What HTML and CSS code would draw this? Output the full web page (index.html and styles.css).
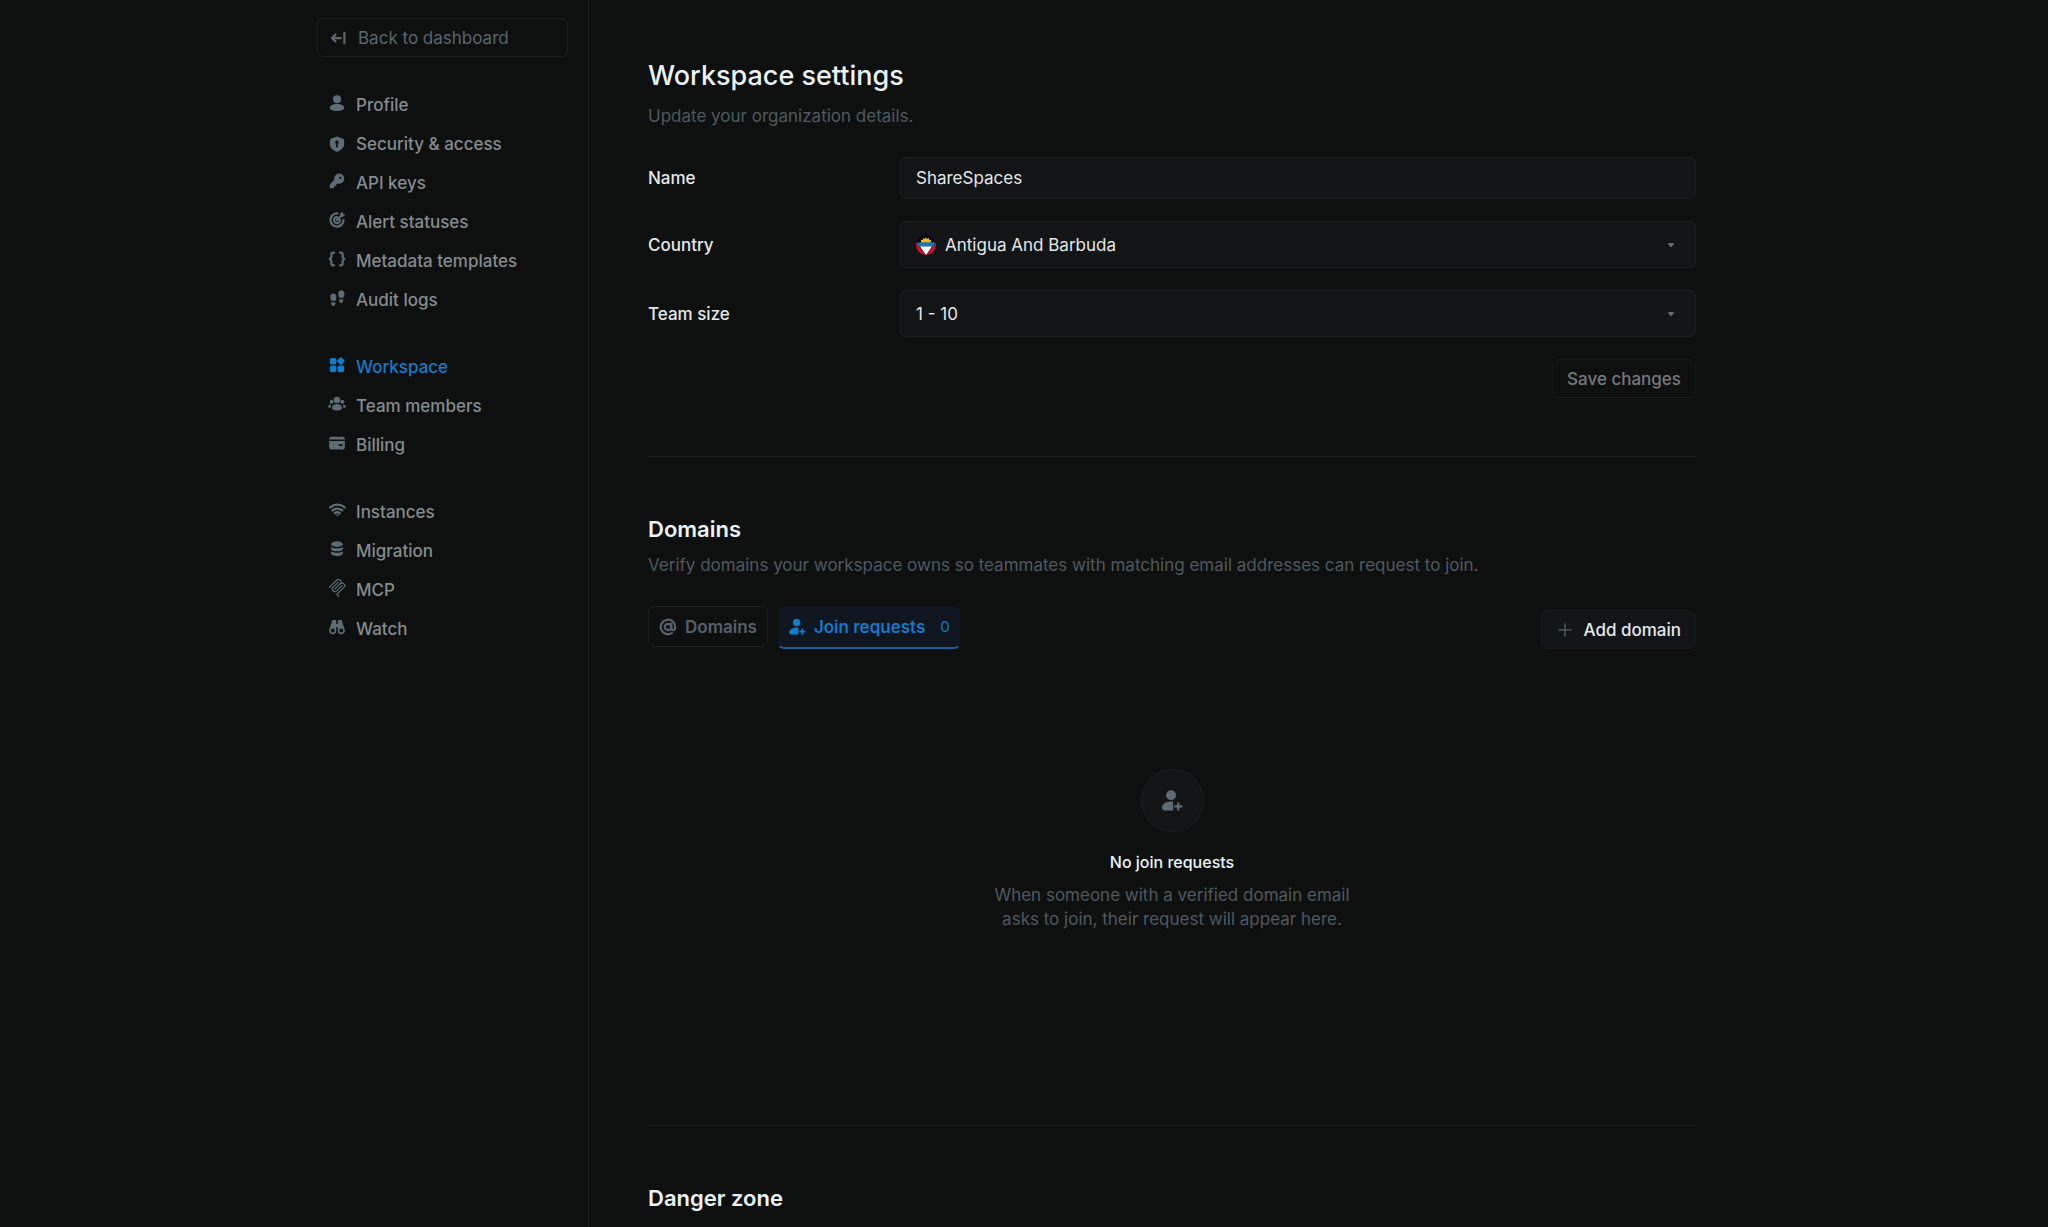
FILE: index.html
```html
<!DOCTYPE html>
<html lang="en">
<head>
    <meta charset="UTF-8">
    <meta name="viewport" content="width=device-width, initial-scale=1.0">
    <title>Workspace settings</title>
    <link rel="stylesheet" href="styles.css">
</head>
<body>
    <div class="layout">
        <aside class="sidebar">
            <a href="#" class="back-link">
                <svg class="icon" viewBox="0 0 24 24" fill="none" stroke="currentColor" stroke-width="3" stroke-linecap="round" stroke-linejoin="round">
                    <path d="M15.5 12H4M8.5 7.5L4 12l4.5 4.5M20.5 5v14"></path>
                </svg>
                Back to dashboard
            </a>

            <nav class="nav">
                <ul class="nav-group">
                    <li><a href="#" class="nav-link">
                        <svg class="icon" viewBox="0 0 24 24" fill="currentColor">
                            <circle cx="12" cy="7" r="5.4"></circle>
                            <path d="M12 13.400c6 0 9.500 2.200 9.500 4.800s-3.500 4.300-9.500 4.300-9.500-1.700-9.500-4.300 3.500-4.800 9.500-4.800z"></path>
                        </svg>
                        Profile
                    </a></li>
                    <li><a href="#" class="nav-link">
                        <svg class="icon shield" viewBox="0 0 24 24" fill="currentColor" fill-rule="evenodd">
                            <path d="M12 2l7.500 2.700c1.200.4 2 1.500 2 2.800V12c0 5-3.900 8.300-9.500 10.500C6.400 20.300 2.500 17 2.500 12V7.500c0-1.300.8-2.400 2-2.800zM12 7.500a2.300 2.300 0 00-1.200 4.300v4.400h2.400v-4.400A2.300 2.300 0 0012 7.500z"></path>
                        </svg>
                        Security &amp; access
                    </a></li>
                    <li><a href="#" class="nav-link">
                        <svg class="icon" viewBox="0 0 24 24" fill="currentColor" fill-rule="evenodd">
                            <path d="M15 2a6.800 6.800 0 11-2.400 13.200L11 16.800v2H8.700l-.5.500v2.200H3.800c-.8 0-1.500-.5-1.500-1.300v-3.500l6.200-6.300A6.800 6.800 0 0115 2zM16.300 6.400a1.500 1.500 0 100 3 1.500 1.500 0 000-3z"></path>
                        </svg>
                        API keys
                    </a></li>
                    <li><a href="#" class="nav-link">
                        <svg class="icon" viewBox="0 0 24 24" fill="none" stroke="currentColor" stroke-width="3" stroke-linecap="round" stroke-linejoin="round">
                            <path d="M12.500 3.300A8.700 8.700 0 1020.700 12M12 8a4 4 0 104 4M12 12l5-5"></path>
                            <path d="M17 7V4.500L19 2.500l.5 2 2 .5L19.500 7z" fill="currentColor" stroke-width="2"></path>
                        </svg>
                        Alert statuses
                    </a></li>
                    <li><a href="#" class="nav-link">
                        <svg class="icon" viewBox="0 0 24 24" fill="none" stroke="currentColor" stroke-width="3" stroke-linecap="round" stroke-linejoin="round">
                            <path d="M8 3.500H7A2.500 2.500 0 004.500 6v3.500L2.500 12l2 2.500V18A2.500 2.500 0 007 20.500h1M16 3.500h1A2.500 2.500 0 0119.500 6v3.500l2 2.500-2 2.500V18a2.500 2.500 0 01-2.500 2.500h-1"></path>
                        </svg>
                        Metadata templates
                    </a></li>
                    <li><a href="#" class="nav-link">
                        <svg class="icon" viewBox="0 0 24 24" fill="currentColor">
                            <path d="M7 6c2.700 0 4.200 2 4.200 4.800 0 1.700-.5 3.200-.8 5H4.300C4 14 3 12.500 3 10.600 3 8 4.500 6 7 6zM4.300 17.500H10c0 3.500-1 5-2.900 5s-2.800-1.500-2.800-5z"></path>
                            <path d="M17.700 1.500c2.700 0 4.300 2 4.300 4.900 0 1.900-1 3.600-1.300 5.400h-6.200c-.3-1.800-.9-3.300-.9-5 0-3 1.500-5.300 4.100-5.300zM14.700 13.500h5.700c0 3.500-1 5-2.900 5s-2.800-1.500-2.800-5z"></path>
                        </svg>
                        Audit logs
                    </a></li>
                </ul>

                <ul class="nav-group">
                    <li><a href="#" class="nav-link active" aria-current="page">
                        <svg class="icon" viewBox="0 0 24 24" fill="currentColor">
                            <rect x="2.5" y="2.5" width="8.7" height="8.7" rx="2.2"></rect>
                            <rect x="2.5" y="12.8" width="8.7" height="8.7" rx="2.2"></rect>
                            <rect x="12.8" y="12.8" width="8.7" height="8.7" rx="2.2"></rect>
                            <rect x="13.2" y="2.7" width="8" height="8" rx="2" transform="rotate(45 17.2 6.7)"></rect>
                        </svg>
                        Workspace
                    </a></li>
                    <li><a href="#" class="nav-link">
                        <svg class="icon" viewBox="0 0 24 24" fill="currentColor">
                            <circle cx="12" cy="6.5" r="4.3"></circle>
                            <circle cx="4.9" cy="9" r="2.7"></circle>
                            <circle cx="19.1" cy="9" r="2.7"></circle>
                            <path d="M12 12c4.300 0 6.700 2.400 6.700 4.900 0 2.400-2.400 3.800-6.700 3.800s-6.700-1.400-6.700-3.800C5.300 14.400 7.700 12 12 12zM4.700 12.800c-1 1.200-1.500 2.600-1.200 4.500C1.300 17.100.3 16.300.3 15.200c0-1.400 1.700-2.400 4.400-2.400zM19.300 12.800c1 1.200 1.500 2.600 1.200 4.500 2.200-.2 3.200-1 3.200-2.100 0-1.400-1.700-2.400-4.400-2.400z"></path>
                        </svg>
                        Team members
                    </a></li>
                    <li><a href="#" class="nav-link">
                        <svg class="icon" viewBox="0 0 24 24" fill="currentColor" fill-rule="evenodd">
                            <path d="M4.500 3.500h15a3 3 0 013 3v.7h-21v-.7a3 3 0 013-3zM1.500 9.300h21v8.200a3 3 0 01-3 3h-15a3 3 0 01-3-3zM14.500 13.500v2.500h5v-2.500z"></path>
                        </svg>
                        Billing
                    </a></li>
                </ul>

                <ul class="nav-group">
                    <li><a href="#" class="nav-link">
                        <svg class="icon" viewBox="0 0 24 24" fill="none" stroke="currentColor" stroke-width="3.2" stroke-linecap="round">
                            <path d="M3 8.500a14 14 0 0119 0M6.200 12.600a9.300 9.300 0 0112.600 0M9.500 16.200a4.500 4.500 0 016 0"></path>
                            <circle cx="12.5" cy="19" r=".8" fill="currentColor" stroke-width="1.2"></circle>
                        </svg>
                        Instances
                    </a></li>
                    <li><a href="#" class="nav-link">
                        <svg class="icon" viewBox="0 0 24 24" fill="currentColor">
                            <ellipse cx="12" cy="5.5" rx="8" ry="3.7"></ellipse>
                            <path d="M4 9.200c1.800 1.200 4.600 1.800 8 1.800s6.200-.6 8-1.800v2.300c0 2-3.600 3.500-8 3.500s-8-1.500-8-3.500zM4 15c1.800 1.300 4.600 2 8 2s6.200-.7 8-2v2.700c0 2.100-3.600 3.800-8 3.800s-8-1.700-8-3.800z"></path>
                        </svg>
                        Migration
                    </a></li>
                    <li><a href="#" class="nav-link">
                        <svg class="icon" viewBox="0 0 24 24" fill="currentColor" fill-rule="evenodd">
                            <path d="M15.688 2.343a2.588 2.588 0 00-3.610 0l-9.626 9.440a.863.863 0 01-1.203 0 .823.823 0 010-1.180l9.626-9.440a4.313 4.313 0 016.016 0 4.116 4.116 0 011.204 3.540 4.300 4.300 0 013.609 1.180l.05.05a4.115 4.115 0 010 5.900l-8.706 8.537a.274.274 0 000 .393l1.788 1.754a.823.823 0 010 1.180.863.863 0 01-1.203 0l-1.788-1.753a1.920 1.920 0 010-2.754l8.706-8.538a2.470 2.470 0 000-3.540l-.05-.049a2.588 2.588 0 00-3.607-.003l-7.172 7.034-.1.099a.863.863 0 01-1.204 0 .823.823 0 010-1.180l7.273-7.133a2.470 2.470 0 00-.003-3.537z"></path>
                            <path d="M14.485 4.703a.823.823 0 000-1.180.863.863 0 00-1.204 0l-7.119 6.982a4.115 4.115 0 000 5.900 4.314 4.314 0 006.016 0l7.120-6.982a.823.823 0 000-1.180.863.863 0 00-1.204 0l-7.119 6.982a2.588 2.588 0 01-3.610 0 2.470 2.470 0 010-3.540l7.120-6.982z"></path>
                        </svg>
                        MCP
                    </a></li>
                    <li><a href="#" class="nav-link">
                        <svg class="icon" viewBox="0 0 24 24" fill="currentColor" fill-rule="evenodd">
                            <path d="M7 2.500h3c.6 0 1 .4 1 1V17a4.800 4.800 0 11-9.500-1L4.400 7.200c.3-.8.6-1.200.6-2V4.500c0-1.200.8-2 2-2zM6.300 14a2.700 2.700 0 100 5.400 2.700 2.700 0 000-5.400zM17 2.500h-3c-.6 0-1 .4-1 1V17a4.800 4.800 0 109.500-1l-2.900-8.800c-.3-.8-.6-1.200-.6-2V4.500c0-1.200-.8-2-2-2zM17.700 14a2.700 2.700 0 110 5.400 2.700 2.700 0 010-5.400z"></path>
                            <path d="M10 8h4v4h-4z"></path>
                        </svg>
                        Watch
                    </a></li>
                </ul>
            </nav>
        </aside>

        <main class="content">
            <section class="section">
                <h1>Workspace settings</h1>
                <p class="description">Update your organization details.</p>

                <form class="settings-form">
                    <div class="form-row">
                        <label for="name">Name</label>
                        <input type="text" id="name" name="name" class="field" value="ShareSpaces">
                    </div>

                    <div class="form-row">
                        <label for="country">Country</label>
                        <div class="field select-field">
                            <svg class="flag" viewBox="0 0 20 20">
                                <clipPath id="flagClip"><circle cx="10" cy="10" r="10"></circle></clipPath>
                                <g clip-path="url(#flagClip)">
                                    <rect width="20" height="20" fill="#c8102e"></rect>
                                    <path d="M0 0h20v7.500L10 20 0 7.500z" fill="#000"></path>
                                    <path d="M10 2l1.100 1.900 1.900-1.100.2 2.100 2.300-.2-.8 2.100 1.300 1H4l1.300-1-.8-2.100 2.300.2.200-2.100 1.900 1.100z" fill="#e8b923"></path>
                                    <path d="M0 7.500h20l-3.500 4.300h-13z" fill="#1278c8"></path>
                                    <path d="M4 11.500h12l-6 8.500z" fill="#fff"></path>
                                </g>
                            </svg>
                            <select id="country" name="country">
                                <option>Antigua And Barbuda</option>
                            </select>
                            <svg class="caret" viewBox="0 0 6 4" fill="currentColor"><path d="M1 0h4a.9.9 0 01.7 1.500L3.700 3.700a1 1 0 01-1.400 0L.3 1.500A.9.9 0 011 0z"></path></svg>
                        </div>
                    </div>

                    <div class="form-row">
                        <label for="teamSize">Team size</label>
                        <div class="field select-field">
                            <select id="teamSize" name="teamSize">
                                <option>1 - 10</option>
                            </select>
                            <svg class="caret" viewBox="0 0 6 4" fill="currentColor"><path d="M1 0h4a.9.9 0 01.7 1.500L3.700 3.700a1 1 0 01-1.400 0L.3 1.500A.9.9 0 011 0z"></path></svg>
                        </div>
                    </div>

                    <button type="submit" class="btn btn-save" disabled>Save changes</button>
                </form>
            </section>

            <section class="section">
                <h2>Domains</h2>
                <p class="description">Verify domains your workspace owns so teammates with matching email addresses can request to join.</p>

                <div class="toolbar">
                    <div class="tabs">
                        <button type="button" class="tab">
                            <svg class="icon" viewBox="0 0 24 24" fill="none" stroke="currentColor" stroke-width="3" stroke-linecap="round">
                                <circle cx="12" cy="12" r="4.3"></circle>
                                <path d="M16.300 7.700v5.500c0 1.800 1 2.800 2.500 2.800s2.900-1.200 2.900-4a9.700 9.700 0 10-4.500 8.100"></path>
                            </svg>
                            Domains
                        </button>
                        <button type="button" class="tab active">
                            <svg class="icon" viewBox="0 0 24 24" fill="currentColor">
                                <circle cx="11.5" cy="6" r="5"></circle>
                                <path d="M11.500 12.500c.9 0 1.700.1 2.400.3v9.200H4.800C3 22 1.500 20.900 1.500 19.200c0-3.200 4-6.700 10-6.700z"></path>
                                <path d="M20.200 14v3h3v2.200h-3v3H18v-3h-3V17h3v-3z"></path>
                            </svg>
                            Join requests
                            <span class="count">0</span>
                        </button>
                    </div>
                    <button type="button" class="btn btn-add">
                        <svg class="icon" viewBox="0 0 24 24" fill="none" stroke="currentColor" stroke-width="2" stroke-linecap="round">
                            <path d="M12 4v16M4 12h16"></path>
                        </svg>
                        Add domain
                    </button>
                </div>

                <div class="empty">
                    <div class="empty-icon">
                        <svg viewBox="0 0 24 24" fill="currentColor">
                            <circle cx="10.5" cy="6.5" r="5.2"></circle>
                            <path d="M10.500 13c1 0 1.500.1 2.200.3v9.200H4.300c-1.800 0-3.300-1.100-3.300-3C1 16 5 13 10.500 13z"></path>
                            <path d="M19.100 14v3h3.200v2.300h-3.200v3.200h-2.300v-3.200H14V17h2.800v-3z"></path>
                        </svg>
                    </div>
                    <h3>No join requests</h3>
                    <p class="description">When someone with a verified domain email asks to join, their request will appear here.</p>
                </div>
            </section>

            <section class="section">
                <h2>Danger zone</h2>
            </section>
        </main>
    </div>
</body>
</html>
```

FILE: styles.css
```css
* {
    box-sizing: border-box;
}
body {
    margin: 0;
    background-color: #0e100f;
    color: #e4e8ea;
    font-family: Inter, sans-serif;
    font-size: 17px;
    line-height: 24px;
}
h1, h2, h3, p, ul {
    margin: 0;
    padding: 0;
}
h1, h2, h3 {
    color: #ebf3f7;
}
h1 {
    font-size: 27px;
    font-weight: 500;
    line-height: 38px;
}
h2 {
    font-size: 22px;
    font-weight: 600;
    line-height: 30px;
}
h3 {
    font-size: 16px;
    font-weight: 500;
    line-height: 24px;
}
a {
    color: inherit;
    text-decoration: none;
}
button, input, select {
    font: inherit;
    color: inherit;
}
button {
    cursor: pointer;
}
.layout {
    display: flex;
    max-width: 1460px;
    height: 100vh;
    margin: 0 auto;
    overflow: hidden;
}
.sidebar {
    flex: 0 0 295px;
    padding: 18px 20px 18px 23px;
    border-right: 1px solid #1c1f20;
}
.icon {
    flex: none;
    width: 18px;
    height: 18px;
}
.back-link {
    display: flex;
    align-items: center;
    gap: 11px;
    height: 39px;
    padding: 0 11px;
    border: 1px solid #1c1f20;
    border-radius: 6px;
    color: #5b666e;
}
.nav {
    display: flex;
    flex-direction: column;
    gap: 31px;
    margin-top: 30px;
}
.nav-group {
    display: flex;
    flex-direction: column;
    gap: 3px;
    list-style: none;
}
.nav-link {
    display: flex;
    align-items: center;
    gap: 10px;
    height: 36px;
    padding: 0 11px;
    color: #858b8f;
    font-weight: 500;
}
.nav-link .icon {
    margin-bottom: 4px;
    color: #5c6b76;
}
.nav-link .shield {
    margin-bottom: 0;
}
.nav-link.active,
.nav-link.active .icon {
    color: #127bca;
}
.content {
    flex: 1;
    min-width: 0;
    padding: 0 58px 0 59px;
}
.section {
    padding: 57px 0 58px;
}
.section + .section {
    border-top: 1px solid #1c1f20;
}
.description {
    color: #4f5960;
}
.section > .description {
    margin-top: 9px;
}
.settings-form {
    display: flex;
    flex-direction: column;
    gap: 22px;
    margin-top: 29px;
}
.form-row {
    display: grid;
    grid-template-columns: 252px 1fr;
    align-items: center;
}
.form-row label {
    font-weight: 500;
}
.field {
    width: 100%;
    height: 42px;
    padding: 0 15px;
    background-color: #121416;
    border: 1px solid #1c1f20;
    border-radius: 6px;
}
.select-field {
    display: flex;
    align-items: center;
    gap: 9px;
    height: 47px;
    padding-right: 21px;
}
.select-field select {
    flex: 1;
    appearance: none;
    background: none;
    border: none;
    padding: 0;
}
.flag {
    width: 20px;
    height: 20px;
}
.caret {
    width: 6px;
    height: 4px;
    color: #5c6b76;
}
.btn {
    height: 39px;
    padding: 0 14px;
    border-radius: 6px;
    font-weight: 500;
}
.btn-save {
    align-self: flex-end;
    background: none;
    border: 1px solid #151818;
    color: #76797a;
}
.toolbar {
    display: flex;
    align-items: flex-end;
    justify-content: space-between;
    margin-top: 29px;
}
.tabs {
    display: flex;
    align-items: flex-start;
    gap: 10px;
}
.tab {
    display: flex;
    align-items: center;
    gap: 8px;
    height: 41px;
    padding: 0 10px;
    background: none;
    border: 1px solid #1c1f20;
    border-radius: 6px;
    color: #56606a;
    font-weight: 600;
}
.tab.active {
    height: 43px;
    padding: 0 9px;
    background-color: #0f161f;
    border-color: #0f161f;
    border-bottom: 2px solid #1c5e93;
    color: #127bca;
}
.count {
    margin-left: 7px;
    font-size: 15px;
    font-weight: 400;
}
.btn-add {
    display: flex;
    align-items: center;
    gap: 9px;
    background-color: #121517;
    border: 1px solid #171a1c;
}
.btn-add .icon {
    color: #4b5860;
}
.empty {
    display: flex;
    flex-direction: column;
    align-items: center;
    padding: 120px 0 136px;
    text-align: center;
}
.empty-icon {
    display: flex;
    align-items: center;
    justify-content: center;
    width: 63px;
    height: 63px;
    margin-bottom: 18px;
    background-color: #121416;
    border: 1px solid #1c1f20;
    border-radius: 50%;
    color: #5c6b76;
}
.empty-icon svg {
    width: 23px;
    height: 23px;
}
.empty .description {
    max-width: 380px;
    margin-top: 9px;
}
```
